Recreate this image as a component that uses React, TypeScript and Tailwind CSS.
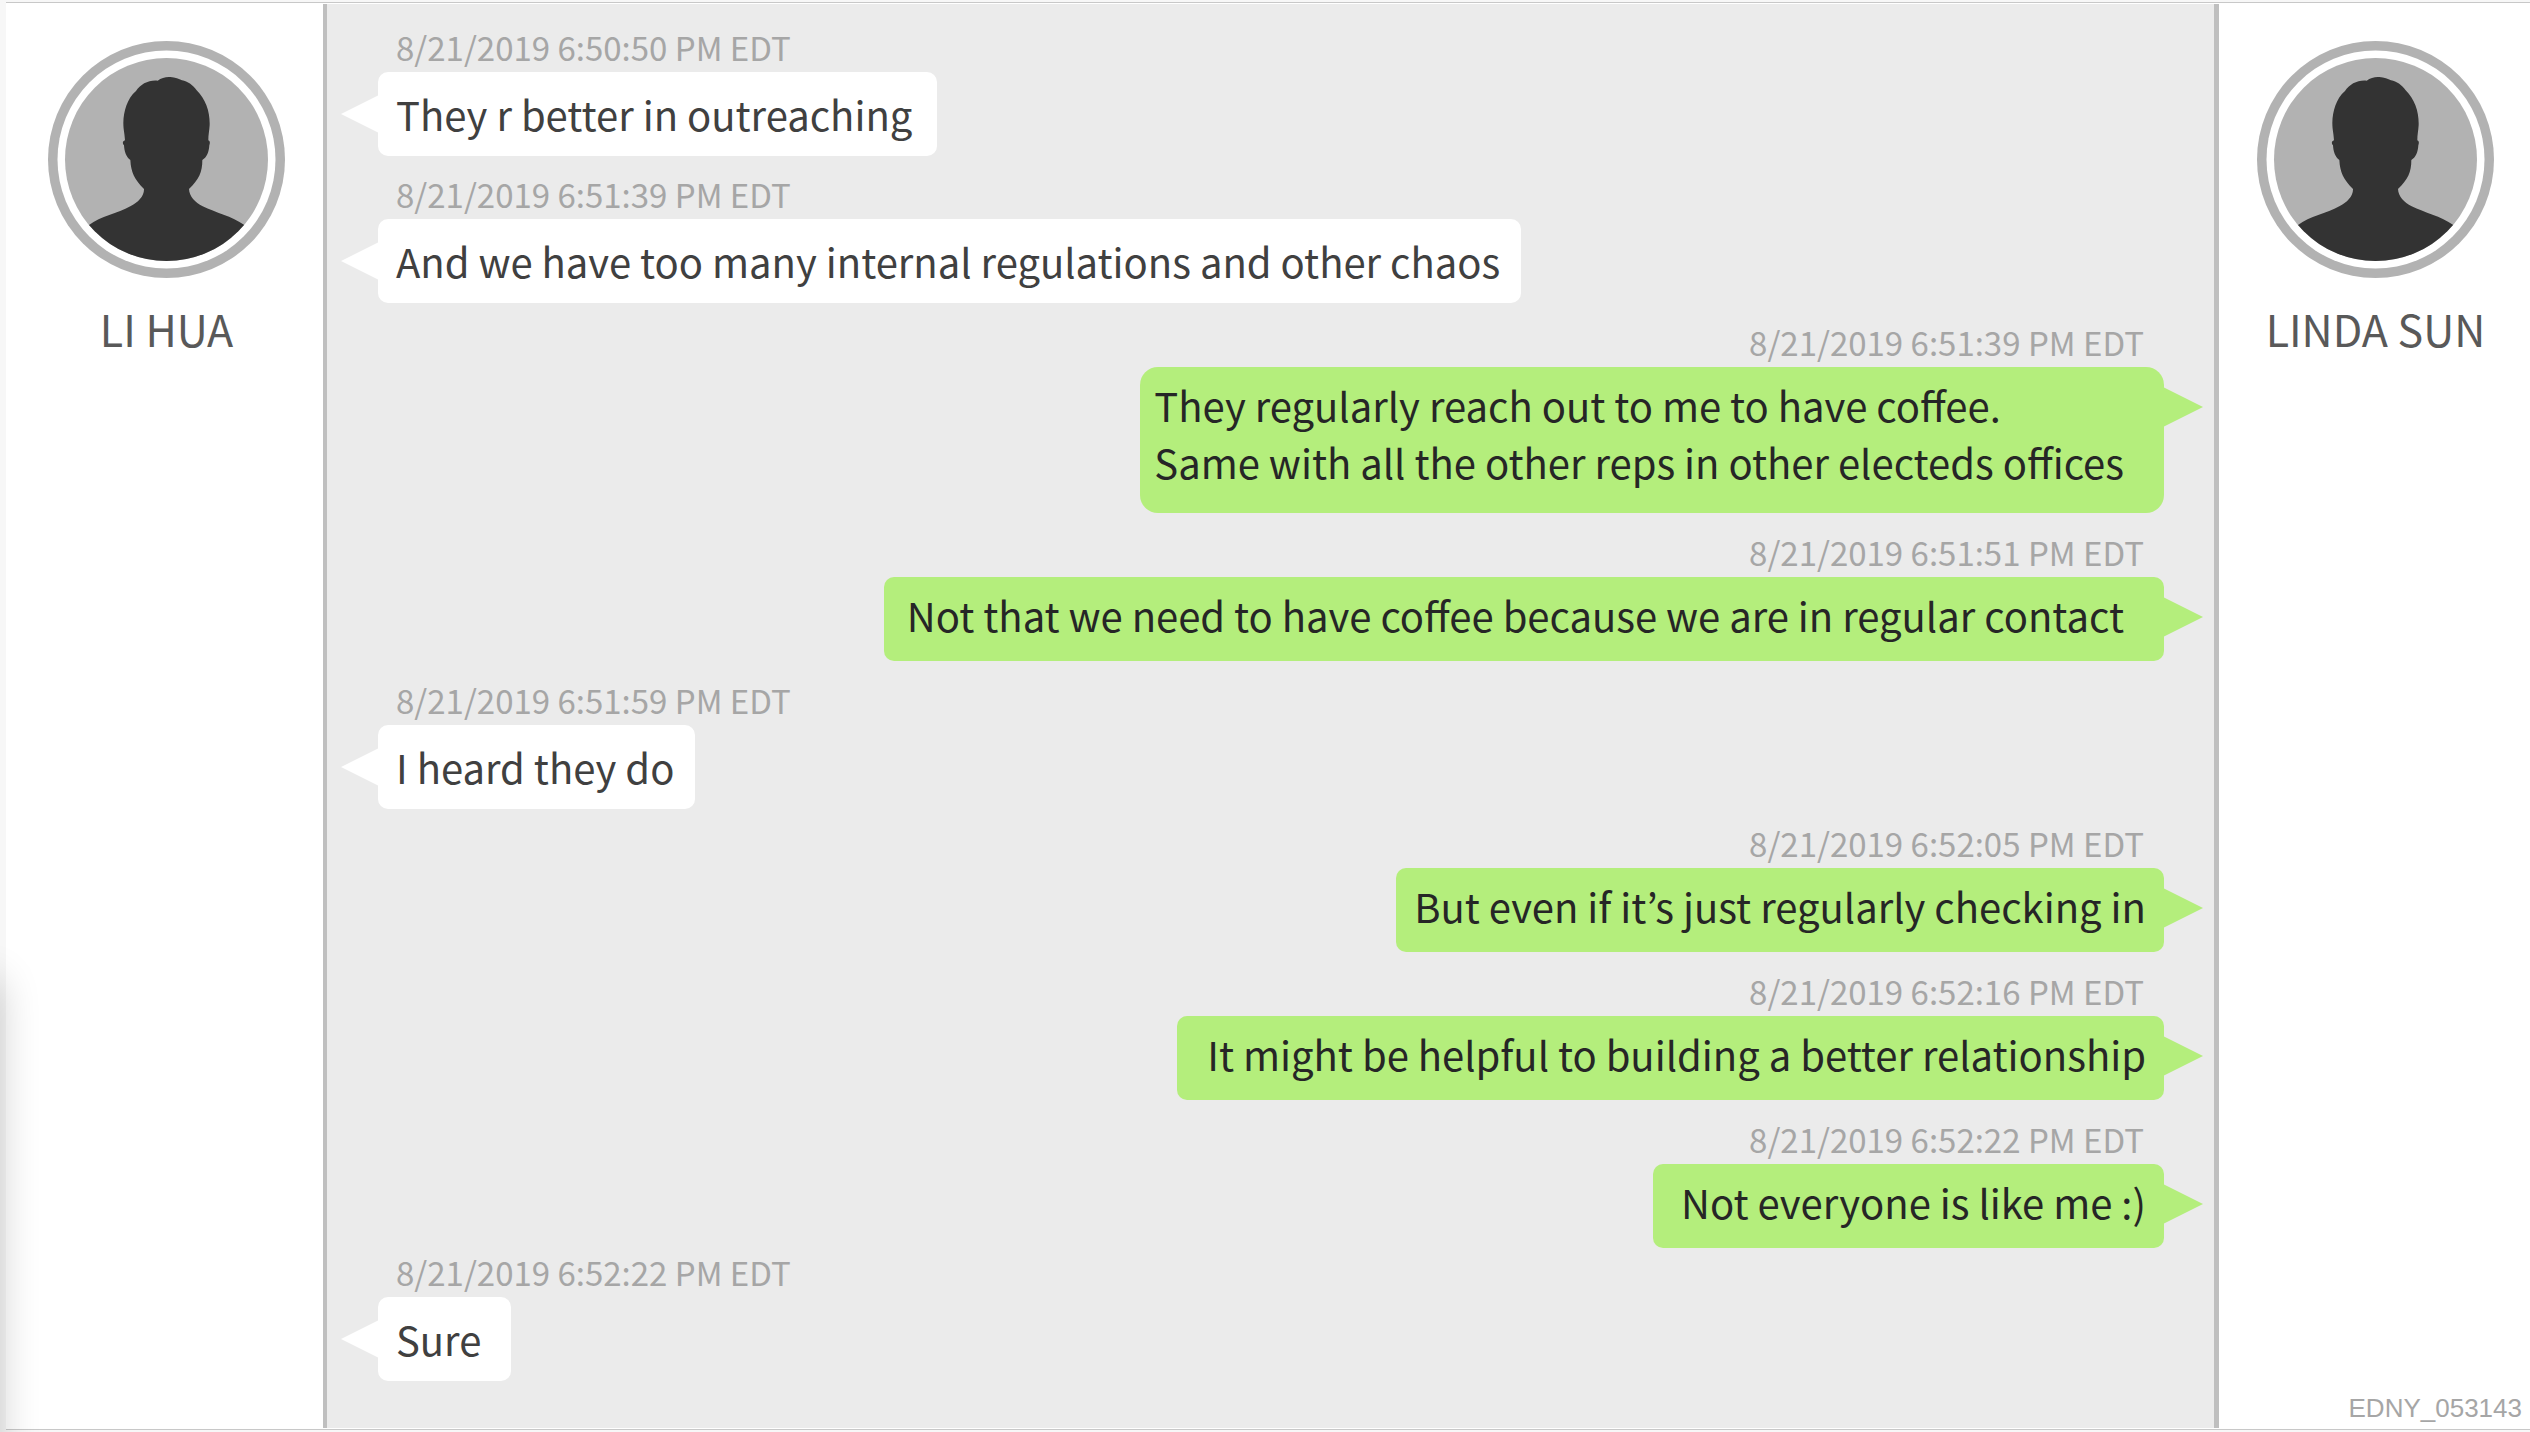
import clsx from 'clsx';

type Message = {
    id: number;
    sender: 'hua' | 'sun';
    time: string;
    lines: string[];
    spacing: string;
    bubble: string;
};

const messages: Message[] = [
    {
        id: 1,
        sender: 'hua',
        time: '8/21/2019 6:50:50 PM EDT',
        lines: ['They r better in outreaching'],
        spacing: 'mt-0',
        bubble: 'min-w-[559px] rounded-[10px]',
    },
    {
        id: 2,
        sender: 'hua',
        time: '8/21/2019 6:51:39 PM EDT',
        lines: ['And we have too many internal regulations and other chaos'],
        spacing: 'mt-5',
        bubble: 'min-w-[1143px] rounded-[10px]',
    },
    {
        id: 3,
        sender: 'sun',
        time: '8/21/2019 6:51:39 PM EDT',
        lines: [
            'They regularly reach out to me to have coffee.',
            'Same with all the other reps in other electeds offices',
        ],
        spacing: 'mt-[21px]',
        bubble: 'min-w-[1022px] rounded-[18px] pl-3.5 pr-10 pb-[22px]',
    },
    {
        id: 4,
        sender: 'sun',
        time: '8/21/2019 6:51:51 PM EDT',
        lines: ['Not that we need to have coffee because we are in regular contact'],
        spacing: 'mt-[21px]',
        bubble: 'min-w-[1280px] rounded-[10px] pl-[18px] pr-10 pb-[17px]',
    },
    {
        id: 5,
        sender: 'hua',
        time: '8/21/2019 6:51:59 PM EDT',
        lines: ['I heard they do'],
        spacing: 'mt-[21px]',
        bubble: 'min-w-[317px] rounded-[10px]',
    },
    {
        id: 6,
        sender: 'sun',
        time: '8/21/2019 6:52:05 PM EDT',
        lines: ['But even if it’s just regularly checking in'],
        spacing: 'mt-4',
        bubble: 'min-w-[767px] rounded-[10px] px-[18px] pb-[17px]',
    },
    {
        id: 7,
        sender: 'sun',
        time: '8/21/2019 6:52:16 PM EDT',
        lines: ['It might be helpful to building a better relationship'],
        spacing: 'mt-[21px]',
        bubble: 'min-w-[987px] rounded-[10px] px-[18px] pb-[17px]',
    },
    {
        id: 8,
        sender: 'sun',
        time: '8/21/2019 6:52:22 PM EDT',
        lines: ['Not everyone is like me :)'],
        spacing: 'mt-[21px]',
        bubble: 'min-w-[511px] rounded-[10px] px-[18px] pb-[17px]',
    },
    {
        id: 9,
        sender: 'hua',
        time: '8/21/2019 6:52:22 PM EDT',
        lines: ['Sure'],
        spacing: 'mt-1.5',
        bubble: 'min-w-[133px] rounded-[10px]',
    },
];

const Avatar = () => (
    <svg viewBox="144 123 711 711" className="size-[237px]" aria-hidden="true">
        <defs>
            <clipPath id="face">
                <circle cx="499.5" cy="478.5" r="304.5" />
            </clipPath>
        </defs>
        <circle cx="499.5" cy="478.5" r="355.5" fill="#b2b2b2" />
        <circle cx="499.5" cy="478.5" r="327" fill="#fff" />
        <circle cx="499.5" cy="478.5" r="304.5" fill="#b2b2b2" />
        <path
            clipPath="url(#face)"
            fill="#333"
            d="M473 242C484 234 497 230 511 231C526 232 537 236 546 241C563 245 578 254 590 271C618 299 630 336 629 375C628 392 625 404 625 421C631 423 630 430 628 436C627 455 621 472 607 480C607 517 597 538 567 567C568 589 585 607 608 619C646 638 696 649 733 675L760 834H240L267 675C302 649 353 640 391 619C414 607 433 589 432 567C403 538 393 517 391 480C378 471 373 454 372 436C367 431 367 424 375 421C374 400 370 389 370 368C371 334 381 296 408 273C421 252 448 239 473 242Z"
        />
    </svg>
);

const Tail = ({ side }: { side: 'left' | 'right' }) =>
    side === 'left' ? (
        <svg viewBox="0 0 38 38" className="absolute top-[23px] right-full -mr-px size-[38px]" aria-hidden="true">
            <path d="M38 0V38L0 19Z" fill="#fff" />
        </svg>
    ) : (
        <svg viewBox="0 0 40 40" className="absolute top-5 left-full -ml-px size-10" aria-hidden="true">
            <path d="M0 0V40L40 20Z" fill="#b4ee7c" />
        </svg>
    );

const Bubble = ({ message }: { message: Message }) => {
    const own = message.sender === 'sun';

    return (
        <li className={clsx('flex flex-col', own ? 'items-end' : 'items-start', message.spacing)}>
            <time className={clsx('mb-[7px] text-[33px] leading-9 text-[#a6a6a6]', own ? 'mr-5' : 'ml-[18px]')}>
                {message.time}
            </time>
            <div
                className={clsx(
                    'relative text-[40px] leading-[57px]',
                    message.bubble,
                    own ? 'flex justify-end bg-[#b4ee7c] pt-2.5 text-[#262626]' : 'bg-white px-[18px] pt-3.5 pb-[13px] text-[#404040]'
                )}
            >
                <Tail side={own ? 'right' : 'left'} />
                <div>
                    {message.lines.map((line) => (
                        <p key={line}>{line}</p>
                    ))}
                </div>
            </div>
        </li>
    );
};

const App = () => {
    return (
        <div className="relative flex min-h-screen flex-col overflow-hidden bg-[#f7f7f7] pt-0.5 pb-0.5 pl-1.5 font-['Noto_Sans_CJK_KR',sans-serif]">
            <main className="flex grow border-y border-[#c8c8c8] bg-white py-px">
                <aside className="flex w-[321px] shrink-0 flex-col items-center border-r-4 border-[#bfbfbf] pt-[37px] pl-1">
                    <Avatar />
                    <h2 className="mt-5 text-[43px] leading-[60px] text-[#595959]">LI HUA</h2>
                </aside>
                <ol className="min-w-0 grow bg-[#ebebeb] pt-[25px] pr-[50px] pb-6 pl-[51px]">
                    {messages.map((message) => (
                        <Bubble key={message.id} message={message} />
                    ))}
                </ol>
                <aside className="flex w-[316px] shrink-0 flex-col items-center border-l-[5px] border-[#bfbfbf] pt-[37px] pl-0.5">
                    <Avatar />
                    <h2 className="mt-5 text-[43px] leading-[60px] text-[#595959]">LINDA SUN</h2>
                    <p className="mt-auto mr-2 mb-1 self-end font-['Liberation_Sans',sans-serif] text-[26px] leading-8 text-[#a6a6a6]">
                        EDNY_053143
                    </p>
                </aside>
            </main>
            <div className="absolute top-[980px] right-full -bottom-10 w-10 shadow-[0_0_40px_rgba(0,0,0,0.2)]" />
        </div>
    );
};

export default App;
